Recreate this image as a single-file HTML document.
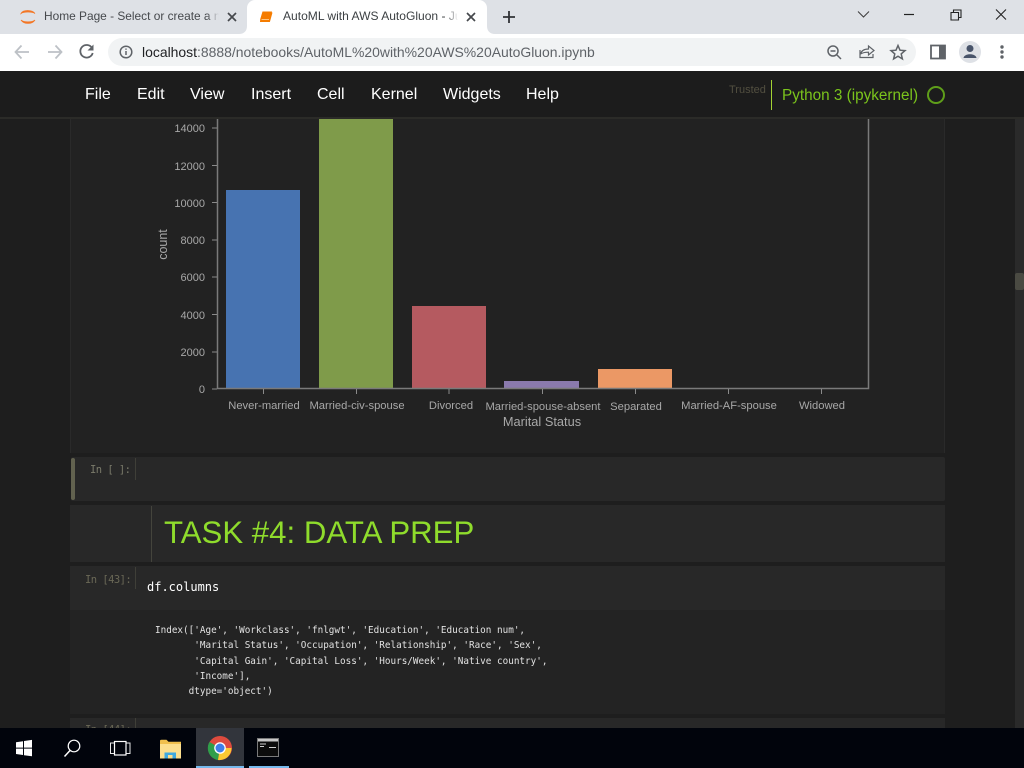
<!DOCTYPE html>
<html><head><meta charset="utf-8"><title>AutoML with AWS AutoGluon</title>
<style>
html,body{margin:0;padding:0;background:#1e1e1e;width:1024px;height:768px;overflow:hidden}
body{position:relative;font-family:"Liberation Sans",sans-serif}
.a{position:absolute}
.t{position:absolute;white-space:pre;line-height:1}
.mono{font-family:"DejaVu Sans Mono","Liberation Mono",monospace}
.pr{font-size:10.500px;letter-spacing:-.55px}
</style></head><body>
<!-- chrome tab strip -->
<div class="a" style="left:0;top:0;width:1024px;height:34px;background:#dee1e6"></div>
<div class="a" style="left:247px;top:0;width:240px;height:34px;background:#fff;border-radius:8px 8px 0 0"></div>
<div class="t" style="left:44px;top:9px;width:175px;overflow:hidden;font-size:11.900px;color:#45484c;line-height:15px">Home Page - Select or create a n</div>
<div class="a" style="left:207px;top:8px;width:12px;height:18px;background:linear-gradient(90deg,rgba(222,225,230,0),#dee1e6)"></div>
<div class="t" style="left:283px;top:9px;width:175px;overflow:hidden;font-size:12.050px;color:#3c4043;line-height:15px">AutoML with AWS AutoGluon - Ju</div>
<div class="a" style="left:446px;top:8px;width:12px;height:18px;background:linear-gradient(90deg,rgba(255,255,255,0),#fff)"></div>
<svg class="a" style="left:0;top:0" width="1024" height="34" viewBox="0 0 1024 34" fill="none">
<path d="M239 34c5 0 8-3 8-8v8zM495 34c-5 0-8-3-8-8v8z" fill="#fff"/>
<path d="M21 13.500C23 9.500 32 9.500 35 13.500C32 11.500 24 11.500 21 13.500zM21 20C24 24.500 32 24.500 35 20C32 22.500 24 22.500 21 20z" fill="#f37726" stroke="#f37726" stroke-width=".8"/>
<path d="M228 13l8 8M236 13l-8 8" stroke="#45484c" stroke-width="1.700"/>
<path d="M262.500 11.500h9.500l-2.300 9.500h-9.700c.3-.8.2-1.300.2-1.800z" fill="#f57c00"/><path d="M260 21.500h9.500l2.500-9" stroke="#f57c00" stroke-width="1"/><path d="M261.500 19.500h7.500" stroke="#ffd9a8" stroke-width=".8"/>
<path d="M467 13l8 8M475 13l-8 8" stroke="#45484c" stroke-width="1.700"/>
<path d="M509 11v12M503 17h12" stroke="#303236" stroke-width="1.800"/>
<path d="M858 11.500l5.500 5.500L869 11.500" stroke="#3c3c3c" stroke-width="1"/>
<path d="M904 14.500h10" stroke="#222" stroke-width="1.200"/>
<path d="M951 12.500h7.500v7.500h-7.500zM953.500 12.500v-2.500h7.500v7.500h-2.500" stroke="#222" stroke-width="1.100"/>
<path d="M996 9.500l10 10M1006 9.500l-10 10" stroke="#222" stroke-width="1.100"/>
</svg>
<!-- toolbar -->
<div class="a" style="left:0;top:34px;width:1024px;height:37px;background:#fff"></div>
<div class="a" style="left:108px;top:38px;width:808px;height:28px;background:#f1f3f4;border-radius:14px"></div>
<svg class="a" style="left:0;top:34px" width="1024" height="37" viewBox="0 34 1024 37" fill="none">
<path d="M29 52H16M21.500 45.500L15.500 52l6 6.500" stroke="#bdc1c6" stroke-width="1.800"/>
<path d="M48 52h13M55.500 45.500l6 6.500-6 6.500" stroke="#bdc1c6" stroke-width="1.800"/>
<path d="M92 48a6.300 6.300 0 1 0 .7 5" stroke="#5f6368" stroke-width="1.800"/><path d="M93.500 44.500v6h-6z" fill="#5f6368"/>
<circle cx="126" cy="52" r="5.800" stroke="#5f6368" stroke-width="1.500"/><path d="M126 51v4M126 48.500v1.300" stroke="#5f6368" stroke-width="1.500"/>
<circle cx="833" cy="51" r="5" stroke="#5f6368" stroke-width="1.500"/><path d="M830.500 51h5M837 55l4 4" stroke="#5f6368" stroke-width="1.500"/>
<path d="M860 50v7.500h13V54M860.500 54c1-3.500 4-5 8-5v-3l5.500 4.500-5.500 4.500v-2.800c-3.500 0-6 .5-8 1.800z" stroke="#5f6368" stroke-width="1.200"/>
<path d="M898 45.500l2 4.700 5 .4-3.800 3.300 1.200 5-4.400-2.700-4.400 2.700 1.200-5-3.800-3.300 5-.4z" stroke="#5f6368" stroke-width="1.500"/>
<path d="M931 45.500h14v13h-14z" stroke="#5f6368" stroke-width="1.800"/><path d="M939 46h6v12h-6z" fill="#5f6368"/>
<circle cx="970" cy="52" r="11" fill="#dee1e6"/><circle cx="970" cy="48.500" r="3.500" fill="#48546a"/><path d="M963.500 58c.5-5 12.500-5 13 0z" fill="#48546a"/>
<circle cx="1002" cy="47" r="1.700" fill="#5f6368"/><circle cx="1002" cy="52" r="1.700" fill="#5f6368"/><circle cx="1002" cy="57" r="1.700" fill="#5f6368"/>
</svg>
<div class="t" style="left:142px;top:44px;font-size:13.950px;color:#5f6368;line-height:16px"><span style="color:#202124">localhost</span>:8888/notebooks/AutoML%20with%20AWS%20AutoGluon.ipynb</div>
<!-- page -->
<div class="a" style="left:0;top:71px;width:1024px;height:657px;background:#1e1e1e"></div>
<div class="a" style="left:1015px;top:118px;width:9px;height:610px;background:#2a2a2a"></div>
<div class="a" style="left:1015px;top:273px;width:9px;height:17px;background:#4a4a42;border-radius:2px"></div>
<div class="a" style="left:0;top:71px;width:1024px;height:46px;background:#1c1c1c"></div>
<div class="a" style="left:0;top:117px;width:1024px;height:2px;background:#2b2b28"></div>
<div class="t" style="left:85px;top:87px;font-size:16px;color:#fff">File</div>
<div class="t" style="left:137px;top:87px;font-size:16px;color:#fff">Edit</div>
<div class="t" style="left:190px;top:87px;font-size:16px;color:#fff">View</div>
<div class="t" style="left:251px;top:87px;font-size:16px;color:#fff">Insert</div>
<div class="t" style="left:317px;top:87px;font-size:16px;color:#fff">Cell</div>
<div class="t" style="left:371px;top:87px;font-size:16px;color:#fff">Kernel</div>
<div class="t" style="left:443px;top:87px;font-size:16px;color:#fff">Widgets</div>
<div class="t" style="left:526px;top:87px;font-size:16px;color:#fff">Help</div>
<div class="t" style="left:729px;top:85px;font-size:11px;color:#524f40">Trusted</div>
<div class="a" style="left:771px;top:80px;width:1px;height:30px;background:#a4d233"></div>
<div class="t" style="left:782px;top:88px;font-size:15.300px;color:#7bc41c">Python 3 (ipykernel)</div>
<div class="a" style="left:927px;top:86px;width:14px;height:14px;border:2px solid #5f9e1a;border-radius:50%"></div>
<!-- output cell with chart -->
<div class="a" style="left:70px;top:119px;width:875px;height:334px;background:#222;border-left:1px solid #2a2a2a;border-right:1px solid #2a2a2a;box-sizing:border-box"></div>
<svg class="a" style="left:0;top:119px;filter:blur(.3px)" width="1024" height="320" viewBox="0 119 1024 320" font-family="Liberation Sans, sans-serif">
<rect x="226" y="190" width="74" height="198" fill="#4773b1"/>
<rect x="319" y="119" width="74" height="269" fill="#7f9b4a"/>
<rect x="412" y="306" width="74" height="82" fill="#b55a60"/>
<rect x="504" y="381" width="75" height="7" fill="#8a7aad"/>
<rect x="598" y="369" width="74" height="19" fill="#eb9865"/>
<path d="M217.500 119V388.500H868.500V119" fill="none" stroke="#7a7a7a" stroke-width="1.500"/>
<g stroke="#8a8a8a" stroke-width="1">
<path d="M212 128h5M212 165.500h5M212 202.500h5M212 240h5M212 277h5M212 314.500h5M212 352h5M212 389h5"/>
<path d="M263.500 389v5M356.500 389v5M449 389v5M542.500 389v5M635.500 389v5M728.500 389v5M821.500 389v5"/>
</g>
<g fill="#a8a8a8" font-size="11" text-anchor="end">
<text x="205" y="132">14000</text><text x="205" y="170">12000</text><text x="205" y="207">10000</text><text x="205" y="244">8000</text><text x="205" y="281">6000</text><text x="205" y="319">4000</text><text x="205" y="356">2000</text><text x="205" y="393">0</text>
</g>
<g fill="#a8a8a8" font-size="11.200" text-anchor="middle">
<text x="264" y="409">Never-married</text><text x="357" y="409">Married-civ-spouse</text><text x="451" y="409">Divorced</text><text x="543" y="410">Married-spouse-absent</text><text x="636" y="410">Separated</text><text x="729" y="409">Married-AF-spouse</text><text x="822" y="409">Widowed</text>
</g>
<text x="542" y="426" fill="#a8a8a8" font-size="12.800" text-anchor="middle">Marital Status</text>
<text transform="translate(167 244.500) rotate(-90)" fill="#a8a8a8" font-size="12.500" text-anchor="middle">count</text>
</svg>
<!-- empty cell -->
<div class="a" style="left:71px;top:457px;width:874px;height:44px;background:#282828;border-radius:2px"></div>
<div class="a" style="left:71px;top:458px;width:4px;height:42px;background:#62624f;border-radius:2px"></div>
<div class="t mono pr" style="left:90px;top:465px;color:#7a7a6a">In [ ]:</div>
<div class="a" style="left:135px;top:458px;width:1px;height:22px;background:#3f3f38"></div>
<!-- markdown cell -->
<div class="a" style="left:70px;top:505px;width:875px;height:57px;background:#282828"></div>
<div class="a" style="left:151px;top:506px;width:1px;height:56px;background:#44443c"></div>
<div class="t" style="left:164px;top:517px;font-size:31.200px;color:#8fdc2c">TASK #4: DATA PREP</div>
<!-- code cell -->
<div class="a" style="left:70px;top:566px;width:875px;height:45px;background:#282828"></div>
<div class="t mono pr" style="left:85px;top:575px;color:#6a6856">In [43]:</div>
<div class="a" style="left:135px;top:567px;width:1px;height:22px;background:#3f3f38"></div>
<div class="t mono" style="left:147px;top:581px;font-size:12px;color:#fff">df.columns</div>
<div class="a" style="left:70px;top:610px;width:875px;height:104px;background:#232323"></div>
<pre class="a mono" style="left:155px;top:623px;margin:0;font-size:9.320px;line-height:15.300px;color:#e2e2e2">Index(['Age', 'Workclass', 'fnlgwt', 'Education', 'Education num',
       'Marital Status', 'Occupation', 'Relationship', 'Race', 'Sex',
       'Capital Gain', 'Capital Loss', 'Hours/Week', 'Native country',
       'Income'],
      dtype='object')</pre>
<!-- next cell -->
<div class="a" style="left:70px;top:718px;width:875px;height:10px;background:#282828"></div>
<div class="a" style="left:135px;top:718px;width:1px;height:10px;background:#3f3f38"></div>
<div class="t mono pr" style="left:85px;top:725px;color:#6a6856">In [44]:</div>
<!-- taskbar -->
<div class="a" style="left:0;top:728px;width:1024px;height:40px;background:#01040c"></div>
<div class="a" style="left:196px;top:728px;width:48px;height:40px;background:#32353c"></div>
<div class="a" style="left:196px;top:766px;width:48px;height:2px;background:#76b9ed"></div>
<div class="a" style="left:249px;top:766px;width:40px;height:2px;background:#76b9ed"></div>
<svg class="a" style="left:0;top:728px" width="300" height="40" viewBox="0 728 300 40" fill="none">
<path d="M16 742.200l7-1v6.400h-7zM24 741l8-1.100v7.700h-8zM16 748.600h7v6.400l-7-1zM24 748.600h8v7.700l-8-1.100z" fill="#fff"/>
<circle cx="74" cy="746" r="5.800" stroke="#fff" stroke-width="1.200"/><path d="M70 750.500l-5.500 6" stroke="#fff" stroke-width="1.500"/>
<path d="M114 743h-3.500v10.500h3.500M126.500 743h3.500v10.500h-3.500" stroke="#e8e8e8" stroke-width="1"/><rect x="114.500" y="741.500" width="11.500" height="13.500" stroke="#fff" stroke-width="1.200"/>
<path d="M160 741c0-.8.500-1.200 1.500-1.200h5l2 2h12.500v16.500h-21z" fill="#f0c04e"/><rect x="160" y="744" width="21" height="14.500" fill="#fcdf8e"/><path d="M164.500 758.500v-6h11.500v6h-3.500v-3.500h-4.500v3.500z" fill="#3fa9e0"/>
<circle cx="220" cy="748" r="12" fill="#dd4b3e"/><path d="M209.500 742l10.500 6-2 12a12 12 0 0 1-8.500-18z" fill="#2f9e4a"/><path d="M220 748h11.500a12 12 0 0 1-13.500 12z" fill="#fbc933"/><circle cx="220" cy="748" r="5.800" fill="#fff"/><circle cx="220" cy="748" r="4.500" fill="#3f7fe8"/>
<rect x="257.500" y="738.500" width="21" height="18" fill="#0c0c0c" stroke="#7a7a7a"/><rect x="258" y="739" width="20" height="2.500" fill="#c8c8c8"/><path d="M260 744h6M260 746.500h4M269 747.500h7" stroke="#d0d0d0" stroke-width="1"/>
</svg>
</body></html>
